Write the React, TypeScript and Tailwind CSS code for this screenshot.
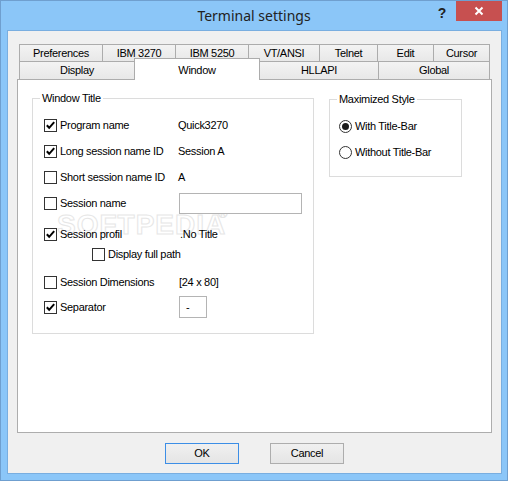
import React from "react";

function Check({ checked }: { checked?: boolean }) {
  return (
    <span className="w-[13px] h-[13px] border border-[#333333] bg-white flex items-center justify-center shrink-0">
      {checked && (
        <svg width="11" height="11" viewBox="0 0 11 11">
          <path d="M1.8 5.2 L4.2 7.8 L9.2 2.2" stroke="#000" strokeWidth="2" fill="none" />
        </svg>
      )}
    </span>
  );
}

function Radio({ checked }: { checked?: boolean }) {
  return (
    <span className="w-[13px] h-[13px] rounded-full border border-[#333333] bg-white flex items-center justify-center shrink-0">
      {checked && <span className="w-[7px] h-[7px] rounded-full bg-[#1a1a1a]" />}
    </span>
  );
}

export default function App() {
  return (
    <div className="w-[508px] h-[481px] bg-[#8bc6f8] border border-[#6f9fcf] font-['Liberation_Sans',Arial,sans-serif] text-[11px] tracking-[-0.3px] text-black relative select-none">
      {/* Title bar */}
      <div className="relative h-[29px] flex items-center justify-center">
        <span className="font-['Noto_Sans',sans-serif] text-[14px] tracking-normal text-[#222222] leading-none">Terminal settings</span>
        <div className="absolute top-0 right-[5px] flex items-start">
          <span className="mt-[5px] mr-[10px] font-bold text-[14px] leading-none text-[#222222]">?</span>
          <div className="w-[46px] h-[20px] bg-[#c75050] flex items-center justify-center">
            <svg width="10" height="10" viewBox="0 0 10 10">
              <path d="M1.5 1.5 L8.5 8.5 M8.5 1.5 L1.5 8.5" stroke="#fff" strokeWidth="2" />
            </svg>
          </div>
        </div>
      </div>

      {/* Client area */}
      <div className="ml-[6px] w-[495px] h-[444px] bg-[#f0f0f0] border border-[#79aee0]">
        <div className="ml-[9px] mt-[13px] w-[475px]">
          {/* Tab row 1 */}
          <div className="flex pl-[2px] h-[17px]">
            <div className="w-[83px] h-[17px] border-l border-t border-[#acacac] bg-gradient-to-b from-[#f3f3f3] to-[#e8e8e8] flex items-center justify-center">Preferences</div>
            <div className="w-[73px] h-[17px] border-l border-t border-[#acacac] bg-gradient-to-b from-[#f3f3f3] to-[#e8e8e8] flex items-center justify-center">IBM 3270</div>
            <div className="w-[73px] h-[17px] border-l border-t border-[#acacac] bg-gradient-to-b from-[#f3f3f3] to-[#e8e8e8] flex items-center justify-center">IBM 5250</div>
            <div className="w-[71px] h-[17px] border-l border-t border-[#acacac] bg-gradient-to-b from-[#f3f3f3] to-[#e8e8e8] flex items-center justify-center">VT/ANSI</div>
            <div className="w-[58px] h-[17px] border-l border-t border-[#acacac] bg-gradient-to-b from-[#f3f3f3] to-[#e8e8e8] flex items-center justify-center">Telnet</div>
            <div className="w-[56px] h-[17px] border-l border-t border-[#acacac] bg-gradient-to-b from-[#f3f3f3] to-[#e8e8e8] flex items-center justify-center">Edit</div>
            <div className="w-[57px] h-[17px] border-l border-t border-r border-[#acacac] bg-gradient-to-b from-[#f3f3f3] to-[#e8e8e8] flex items-center justify-center">Cursor</div>
          </div>
          {/* Tab row 2 */}
          <div className="flex items-end pl-[2px] h-[18px]">
            <div className="w-[115px] h-[18px] border-l border-t border-[#acacac] bg-gradient-to-b from-[#f3f3f3] to-[#e8e8e8] flex items-center justify-center">Display</div>
            <div className="relative z-10 -mb-px w-[126px] h-[22px] border-l border-t border-r border-[#acacac] bg-white flex items-start justify-center pt-[3px]">Window</div>
            <div className="w-[118px] h-[18px] border-t border-[#acacac] bg-gradient-to-b from-[#f3f3f3] to-[#e8e8e8] flex items-center justify-center">HLLAPI</div>
            <div className="w-[112px] h-[18px] border-l border-t border-r border-[#acacac] bg-gradient-to-b from-[#f3f3f3] to-[#e8e8e8] flex items-center justify-center">Global</div>
          </div>
          {/* Panel */}
          <div className="relative w-[475px] h-[354px] border border-[#adadad] bg-white flex items-start pl-[14px] pt-[18px] gap-[15px]">
            {/* Watermark */}
            <span className="pointer-events-none absolute left-[39px] top-[131px] text-[28px] leading-none font-bold tracking-[1px] text-white [-webkit-text-stroke:1px_#e6e6e6]">SOFTPEDIA</span>
            <span className="pointer-events-none absolute left-[200px] top-[127px] text-[13px] leading-none text-white [-webkit-text-stroke:0.6px_#e6e6e6]">®</span>

            {/* Window Title group */}
            <div className="relative w-[282px] h-[236px] border border-[#dcdcdc] pl-[11px] pt-[16px]">
              <span className="absolute left-[7px] -top-[8px] bg-white px-[2px] leading-[14px]">Window Title</span>

              <div className="flex items-center h-[20px]">
                <div className="w-[134px] flex items-center gap-[3px]"><Check checked /><span>Program name</span></div>
                <span>Quick3270</span>
              </div>
              <div className="mt-[6px] flex items-center h-[20px]">
                <div className="w-[134px] flex items-center gap-[3px]"><Check checked /><span>Long session name ID</span></div>
                <span>Session A</span>
              </div>
              <div className="mt-[6px] flex items-center h-[20px]">
                <div className="w-[134px] flex items-center gap-[3px]"><Check /><span>Short session name ID</span></div>
                <span>A</span>
              </div>
              <div className="mt-[6px] flex items-center h-[21px]">
                <div className="w-[135px] flex items-center gap-[3px]"><Check /><span>Session name</span></div>
                <div className="w-[123px] h-[21px] border border-[#b4b4b4] bg-white" />
              </div>
              <div className="relative mt-[10px] flex items-center h-[20px]">
                <div className="w-[136px] flex items-center gap-[3px]"><Check checked /><span>Session profil</span></div>
                <span>.No Title</span>
              </div>
              <div className="flex items-center h-[20px] pl-[48px] gap-[3px]">
                <Check /><span>Display full path</span>
              </div>
              <div className="mt-[8px] flex items-center h-[20px]">
                <div className="w-[135px] flex items-center gap-[3px]"><Check /><span>Session Dimensions</span></div>
                <span>[24 x 80]</span>
              </div>
              <div className="mt-[4px] flex items-center h-[22px]">
                <div className="w-[135px] flex items-center gap-[3px]"><Check checked /><span>Separator</span></div>
                <div className="w-[28px] h-[22px] border border-[#b4b4b4] bg-white flex items-center pl-[6px]">-</div>
              </div>
            </div>

            {/* Maximized Style group */}
            <div className="relative mt-px w-[133px] h-[78px] border border-[#dcdcdc] pl-[9px] pt-[16px]">
              <span className="absolute left-[7px] -top-[8px] bg-white px-[2px] leading-[14px]">Maximized Style</span>
              <div className="flex items-center h-[20px] gap-[3px]"><Radio checked /><span>With Title-Bar</span></div>
              <div className="mt-[6px] flex items-center h-[20px] gap-[3px]"><Radio /><span>Without Title-Bar</span></div>
            </div>
          </div>
        </div>

        {/* Buttons */}
        <div className="mt-[10px] flex justify-center gap-[31px]">
          <button className="w-[74px] h-[21px] border border-[#3c8ee6] bg-gradient-to-b from-[#f0f0f0] to-[#e5e5e5] flex items-center justify-center">OK</button>
          <button className="w-[74px] h-[21px] border border-[#adadad] bg-gradient-to-b from-[#f0f0f0] to-[#e5e5e5] flex items-center justify-center">Cancel</button>
        </div>
      </div>
    </div>
  );
}
